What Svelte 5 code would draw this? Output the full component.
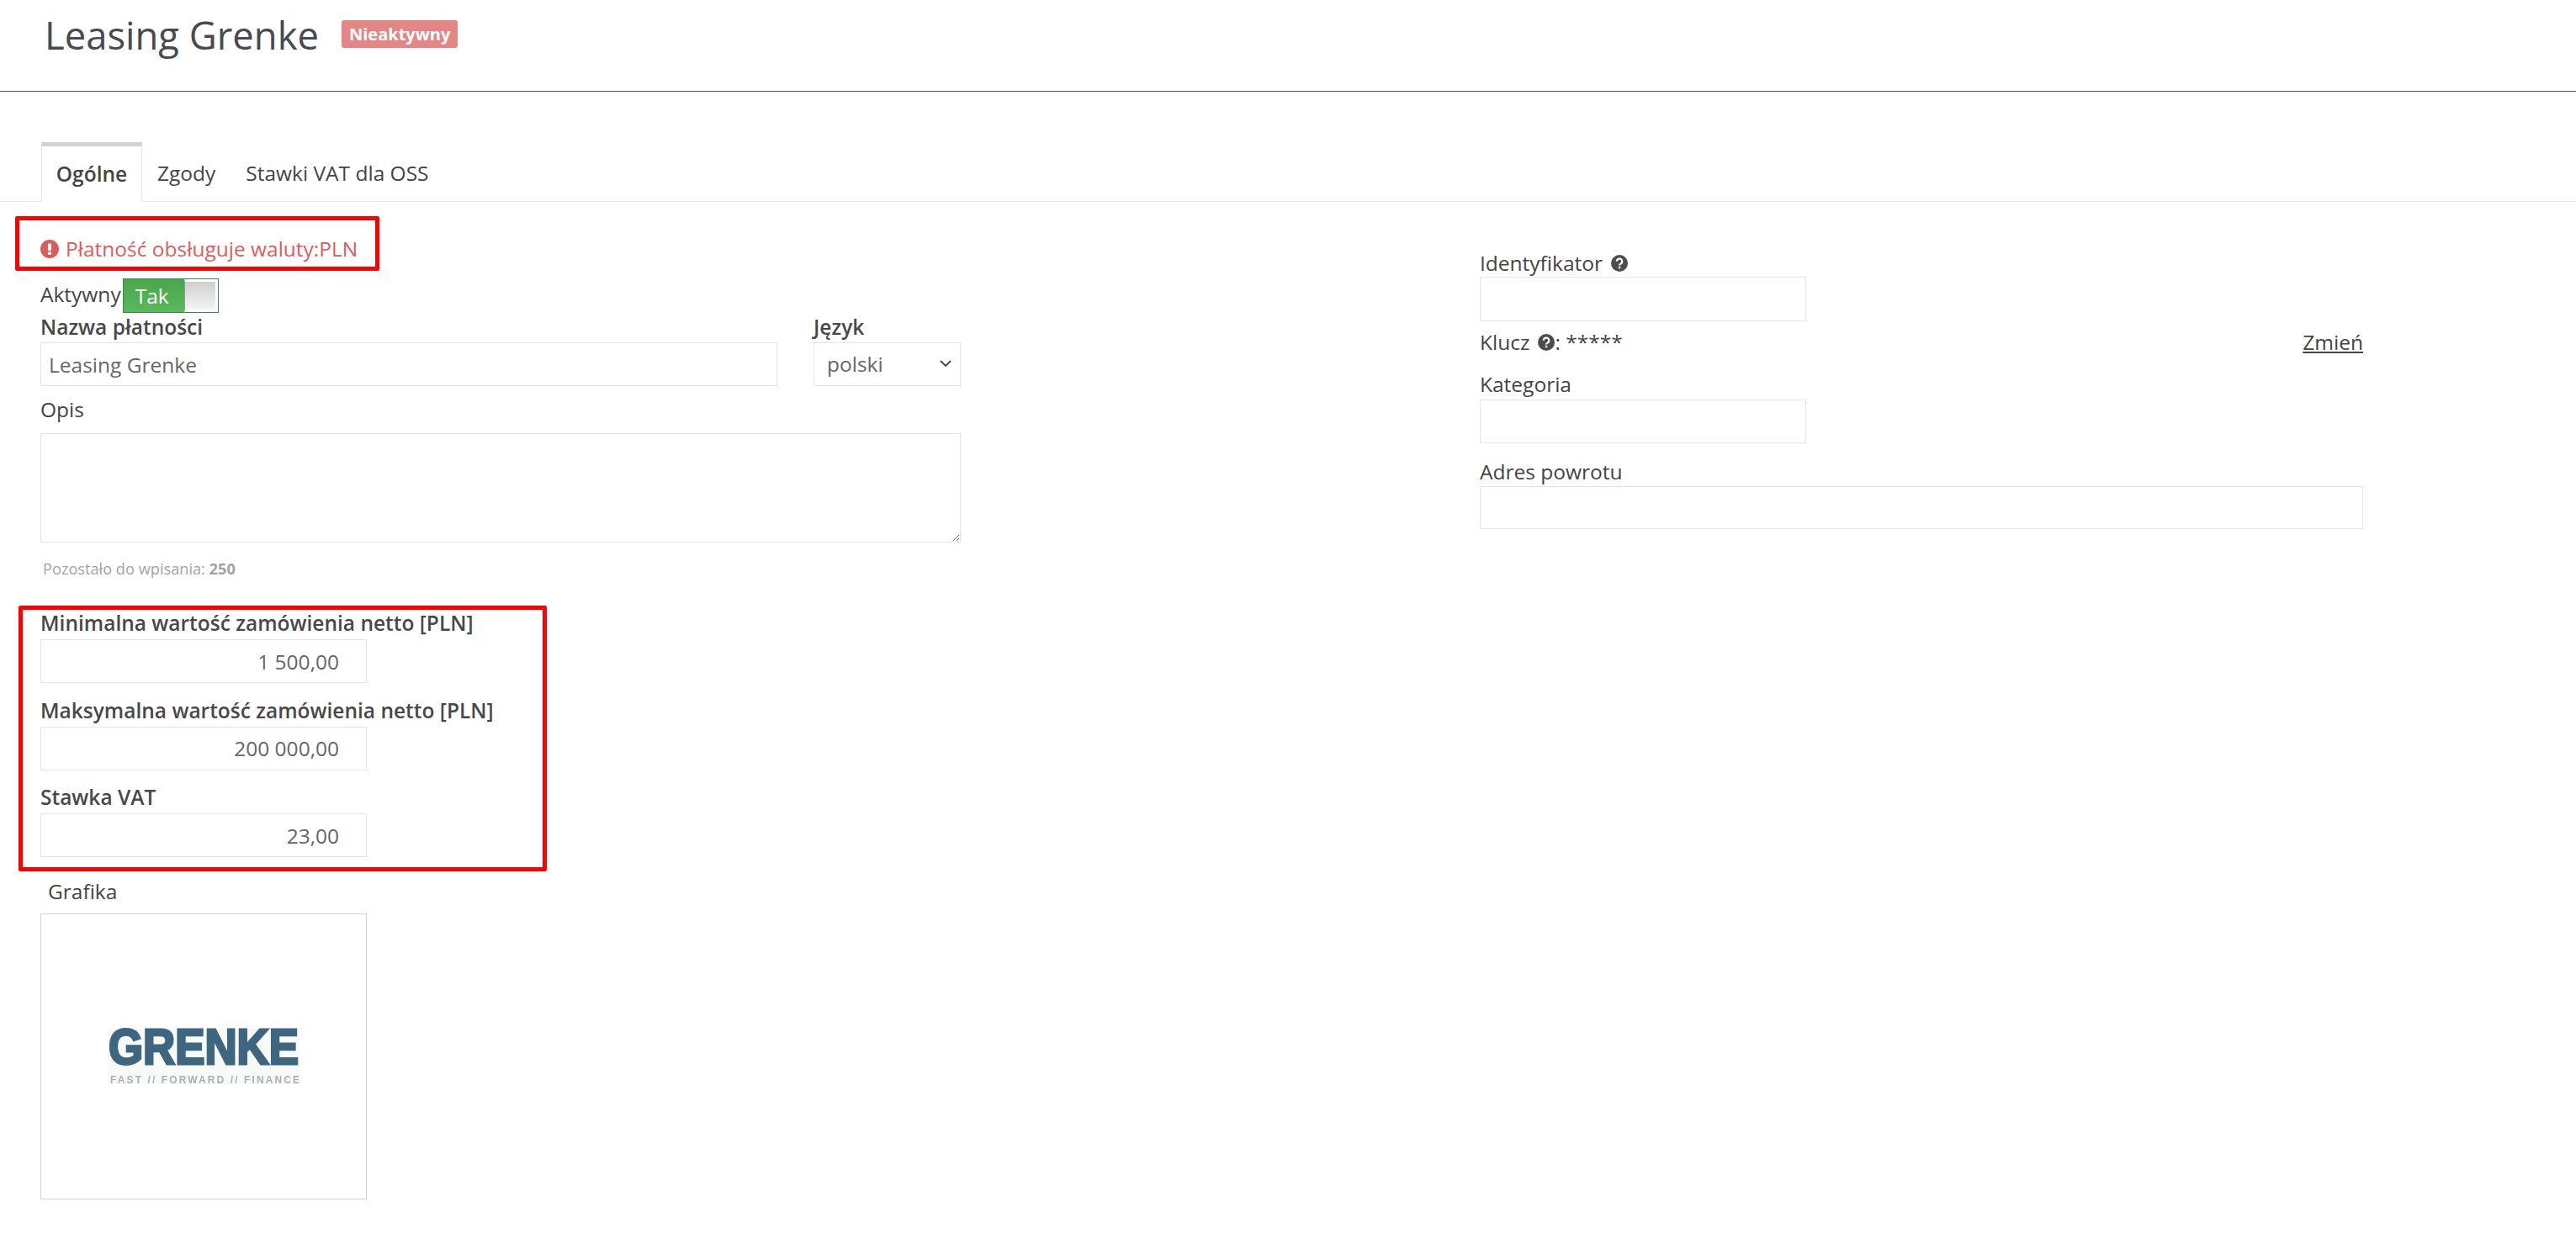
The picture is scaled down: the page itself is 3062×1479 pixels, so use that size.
<script>
    let name = "Leasing Grenke";
    let amounts = [
        { label: "Minimalna wartość zamówienia netto [PLN]", value: "1 500,00" },
        { label: "Maksymalna wartość zamówienia netto [PLN]", value: "200 000,00" },
        { label: "Stawka VAT", value: "23,00" },
    ];
</script>

{#snippet help()}
    <svg class="help" viewBox="0 0 20 20" aria-hidden="true">
        <circle cx="10" cy="10" r="10" fill="#4d4d4d" />
        <path d="M6.8 7.8a3.2 3.2 0 1 1 4.7 2.8c-1 .6-1.5 1-1.5 2" fill="none" stroke="#fff" stroke-width="2.2" />
        <rect x="8.8" y="13.8" width="2.4" height="2.4" fill="#fff" />
    </svg>
{/snippet}

<div class="page">
    <header class="head">
        <h1>{name}</h1>
        <span class="badge">Nieaktywny</span>
    </header>

    <nav class="tabs">
        <span class="tab active">Ogólne</span>
        <span class="tab">Zgody</span>
        <span class="tab">Stawki VAT dla OSS</span>
    </nav>

    <div class="columns">
        <section class="left">
            <p class="alert">
                <svg class="alert-icon" viewBox="0 0 22 22" aria-hidden="true">
                    <circle cx="11" cy="11" r="11" fill="#dc5c5c" />
                    <rect x="9" y="4.5" width="4" height="8.5" rx="1" fill="#fff" />
                    <rect x="9" y="14.5" width="4" height="3.5" rx="1" fill="#fff" />
                </svg>
                Płatność obsługuje waluty:PLN
            </p>

            <div class="active-row">
                <span class="active-label">Aktywny</span>
                <div class="toggle">
                    <span class="toggle-on">Tak</span>
                    <span class="toggle-knob"></span>
                </div>
            </div>

            <div class="name-row">
                <div class="field grow">
                    <label class="strong" for="pay-name">Nazwa płatności</label>
                    <input id="pay-name" class="tall" value={name} />
                </div>
                <div class="field lang">
                    <label class="strong" for="pay-lang">Język</label>
                    <div class="select-wrap">
                        <select id="pay-lang" class="tall">
                            <option>polski</option>
                        </select>
                        <svg class="chevron" viewBox="0 0 16 10" aria-hidden="true">
                            <path d="M2 2l6 6 6-6" fill="none" stroke="#444" stroke-width="1.8" />
                        </svg>
                    </div>
                </div>
            </div>

            <div class="field desc">
                <label for="pay-desc">Opis</label>
                <textarea id="pay-desc"></textarea>
            </div>
            <p class="hint">Pozostało do wpisania: <b>250</b></p>

            <div class="amounts">
                {#each amounts as a}
                    <div class="field amount">
                        <span class="strong label">{a.label}</span>
                        <input class="num" value={a.value} />
                    </div>
                {/each}
            </div>

            <div class="graphic-label">Grafika</div>
            <div class="graphic">
                <svg class="logo" viewBox="-40 -14 308 94" aria-label="GRENKE">
                    <rect width="228" height="66" fill="#f8faf8" />
                    <text x="1" y="42" class="logo-main" textLength="226" lengthAdjust="spacingAndGlyphs">GRENKE</text>
                    <text x="3" y="65" class="logo-sub" textLength="225" lengthAdjust="spacing">FAST // FORWARD // FINANCE</text>
                </svg>
            </div>
        </section>

        <section class="right">
            <label class="inline id-label" for="pay-id">Identyfikator {@render help()}</label>
            <input id="pay-id" class="short id" />

            <div class="key-row">
                <span class="inline">Klucz {@render help()}<span class="stars">: *****</span></span>
                <span class="change">Zmień</span>
            </div>

            <label for="pay-cat" class="cat-label">Kategoria</label>
            <input id="pay-cat" class="short cat" />

            <label for="pay-back" class="back-label">Adres powrotu</label>
            <input id="pay-back" class="back" />
        </section>
    </div>

    <!-- czerwone ramki z adnotacji na zrzucie -->
    <div class="mark mark-alert"></div>
    <div class="mark mark-amounts"></div>
</div>

<style>
    :global(body) {
        margin: 0;
        background: #fff;
    }

    .page {
        position: relative;
        width: 3062px;
        height: 1479px;
        overflow: hidden;
        font-family: "Open Sans", "Noto Sans", sans-serif;
        font-size: 24.5px;
        line-height: 32px;
        color: #444;
    }

    .head {
        display: flex;
        align-items: center;
        height: 109px;
        padding: 0 0 27px 53px;
        box-sizing: border-box;
        border-bottom: 1px solid #555;
    }

    h1 {
        margin: 0;
        font-size: 45.4px;
        font-weight: 400;
        line-height: 60px;
        color: #474a50;
    }

    .badge {
        margin: 0 0 0 27px;
        padding: 0 9px;
        height: 33px;
        line-height: 33px;
        border-radius: 3px;
        background: #e58686;
        color: #fff;
        font-size: 20px;
        font-weight: 700;
    }

    .tabs {
        display: flex;
        margin-top: 60px;
        padding-left: 49px;
        height: 71px;
        box-sizing: border-box;
        border-bottom: 1px solid #e7e7e7;
    }

    .tab {
        padding: 21px 18px 0;
        box-sizing: border-box;
    }

    .tab.active {
        width: 120px;
        height: 71px;
        border: 1px solid #e7e7e7;
        border-top: 5px solid #d2d2d2;
        border-bottom: 0;
        background: #fff;
        padding: 17px 0 0;
        text-align: center;
        font-weight: 600;
    }

    .columns {
        display: flex;
    }

    .left {
        width: 1094px;
        margin-left: 48px;
        flex: none;
    }

    .right {
        width: 1050px;
        margin-left: 617px;
        padding-top: 56px;
        flex: none;
        display: flex;
        flex-direction: column;
    }

    .alert {
        display: flex;
        align-items: center;
        gap: 8px;
        margin: 40px 0 0;
        color: #dc5c5c;
    }

    .alert-icon {
        width: 22px;
        height: 22px;
    }

    .active-row {
        display: flex;
        align-items: center;
        gap: 2px;
        margin-top: 19px;
        height: 41px;
    }

    .active-label {
        padding-bottom: 4px;
    }

    .toggle {
        display: flex;
        width: 114px;
        height: 41px;
        box-sizing: border-box;
        border: 1px solid #3f8a3f;
    }

    .toggle-on {
        width: 72px;
        background: linear-gradient(#4aa64a, #5cb85c);
        color: #fff;
        text-align: center;
        line-height: 39px;
        padding-right: 4px;
        box-sizing: border-box;
    }

    .toggle-knob {
        flex: 1;
        border: 3px solid #fff;
        border-left: 1px solid #999;
        background: linear-gradient(#cfcfcf, #f4f4f4);
    }

    .name-row {
        display: flex;
        gap: 43px;
        margin-top: 1px;
    }

    .field {
        display: flex;
        flex-direction: column;
    }

    .grow {
        width: 876px;
    }

    .lang {
        width: 175px;
    }

    .select-wrap {
        position: relative;
    }

    .chevron {
        position: absolute;
        right: 10px;
        top: 20px;
        width: 16px;
        height: 10px;
    }

    .strong {
        font-weight: 600;
        color: #484848;
    }

    label,
    .label {
        display: block;
        height: 33px;
        white-space: nowrap;
    }

    .name-row label {
        height: 34px;
    }

    input,
    select,
    textarea {
        display: block;
        box-sizing: border-box;
        width: 100%;
        margin: 0;
        border: 1px solid #e5e5e5;
        border-radius: 0;
        background: #fff;
        color: #666;
        font: inherit;
        outline: none;
    }

    input,
    select {
        padding: 0 9px;
    }

    select {
        appearance: none;
        padding-left: 15px;
    }

    .tall {
        height: 52px;
    }

    .desc {
        margin-top: 12px;
        width: 1094px;
    }

    .desc label {
        height: 44px;
    }

    textarea {
        height: 130px;
    }

    .hint {
        margin: 15px 0 0 3px;
        font-size: 18.2px;
        line-height: 32px;
        color: #a3a3a3;
    }

    .amounts {
        margin-top: 33px;
    }

    .amount {
        width: 388px;
        margin-bottom: 16.5px;
    }

    .amount .label {
        height: 35px;
    }

    .num {
        height: 52px;
        text-align: right;
        padding-right: 32px;
    }

    .graphic-label {
        margin: 24.5px 0 10px 9px;
    }

    .graphic {
        display: flex;
        align-items: center;
        justify-content: center;
        width: 388px;
        height: 340px;
        box-sizing: border-box;
        border: 1px solid #d2d2d2;
    }

    .logo {
        width: 308px;
        height: 94px;
        filter: blur(0.4px);
    }

    .logo-main {
        font-family: "Liberation Sans", sans-serif;
        font-size: 60px;
        font-weight: 700;
        fill: #3f667f;
        stroke: #3f667f;
        stroke-width: 3px;
    }

    .logo-sub {
        font-family: "Liberation Sans", sans-serif;
        font-size: 12px;
        font-weight: 700;
        fill: #a7b0b5;
    }

    .inline {
        display: inline-flex;
        align-items: center;
        gap: 0;
        height: 32px;
    }

    .id-label {
        height: 33px;
    }

    .help {
        width: 20px;
        height: 20px;
        margin-left: 10px;
    }

    .stars {
        white-space: pre;
    }

    .short {
        width: 388px;
    }

    .id {
        height: 53px;
    }

    .key-row {
        display: flex;
        justify-content: space-between;
        margin-top: 9px;
    }

    .change {
        text-decoration: underline;
    }

    .cat-label {
        margin-top: 18px;
        height: 34px;
    }

    .cat {
        height: 52px;
    }

    .back-label {
        margin-top: 18px;
        height: 33px;
    }

    .back {
        height: 51px;
    }

    .mark {
        position: absolute;
        box-sizing: border-box;
        border: 5px solid #f00;
        border-radius: 2px;
        pointer-events: none;
    }

    .mark-alert {
        left: 18px;
        top: 257px;
        width: 433px;
        height: 65px;
    }

    .mark-amounts {
        left: 22px;
        top: 720px;
        width: 628px;
        height: 316px;
    }
</style>
